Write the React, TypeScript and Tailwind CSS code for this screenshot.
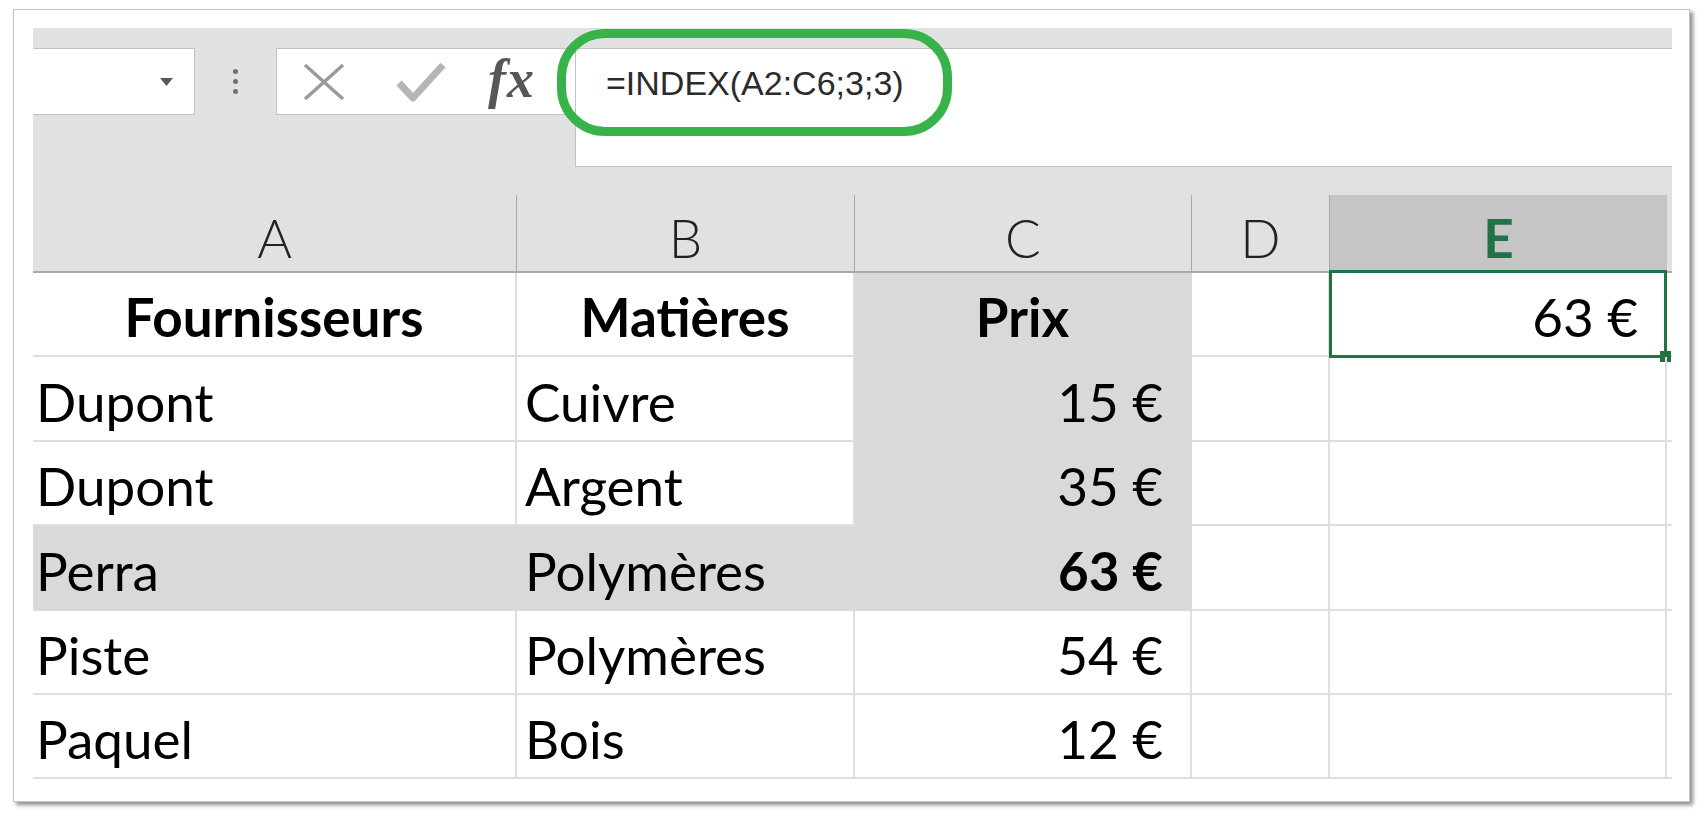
import React from "react";

type Row = {
  a: string;
  b: string;
  c: string;
  head?: boolean;
  hit?: boolean;
};

const rows: Row[] = [
  { a: "Fournisseurs", b: "Matières", c: "Prix", head: true },
  { a: "Dupont", b: "Cuivre", c: "15 €" },
  { a: "Dupont", b: "Argent", c: "35 €" },
  { a: "Perra", b: "Polymères", c: "63 €", hit: true },
  { a: "Piste", b: "Polymères", c: "54 €" },
  { a: "Paquel", b: "Bois", c: "12 €" },
];

const cellBase =
  "h-full shrink-0 flex items-end pb-[12px] leading-none border-b-2 border-r-2";
const white = "border-[#dedede]";
const grey = "bg-[#d9d9d9] border-transparent";

const App = () => {
  return (
    <div className="min-h-screen bg-white pl-[13px] pt-[9px] font-['Lato',sans-serif] text-black">
      <div className="w-[1677px] h-[793px] bg-white border border-[#c4c4c4] shadow-[3px_3px_4px_rgba(0,0,0,0.45)] pl-[19px] pt-[18px] pr-[17px]">
        {/* formula bar + column headers */}
        <div className="relative bg-[#e1e1e1]">
          <div className="flex items-start pt-[20px]">
            <div className="w-[162px] h-[67px] bg-white border-y border-r border-[#c2c2c2] flex items-center justify-end pr-[21px]">
              <svg width="13" height="8" viewBox="0 0 13 8">
                <polygon points="0,0 13,0 6.5,8" fill="#5a5a5a" />
              </svg>
            </div>
            <div className="w-[81px] h-[67px] flex flex-col items-center justify-center gap-[5px]">
              <span className="w-[5px] h-[5px] rounded-full bg-[#707070]" />
              <span className="w-[5px] h-[5px] rounded-full bg-[#707070]" />
              <span className="w-[5px] h-[5px] rounded-full bg-[#707070]" />
            </div>
            <div className="w-[299px] h-[67px] bg-white border-y border-l border-[#c2c2c2] flex items-center">
              <svg className="ml-[25px]" width="44" height="40" viewBox="0 0 44 40">
                <path d="M3 3 L41 37 M41 3 L3 37" stroke="#9a9a9a" strokeWidth="3.5" fill="none" />
              </svg>
              <svg className="ml-[50px]" width="50" height="42" viewBox="0 0 50 42">
                <path d="M3 22 L17 37 L47 4" stroke="#b5b5b5" strokeWidth="7" fill="none" strokeLinejoin="round" />
              </svg>
              <span className="ml-[42px] font-['Liberation_Serif',serif] italic font-bold text-[54px] leading-none text-[#575757] tracking-[1px] -mt-[6px]">
                fx
              </span>
            </div>
            <div className="flex-1 h-[119px] bg-white border-y border-l border-[#c2c2c2] pl-[30px] pt-[17px]">
              <span className="font-['Liberation_Sans',Arial,sans-serif] text-[34px] leading-none text-[#2b2b2b]">
                =INDEX(A2:C6;3;3)
              </span>
            </div>
          </div>

          <div className="flex h-[78px] mt-[28px] text-[53px] leading-none">
            <div className="w-[484px] shrink-0 flex items-end justify-center pb-[7px] border-b-2 border-r border-[#a9a9a9] font-light text-[#222]">A</div>
            <div className="w-[338px] shrink-0 flex items-end justify-center pb-[7px] border-b-2 border-r border-[#a9a9a9] font-light text-[#222]">B</div>
            <div className="w-[337px] shrink-0 flex items-end justify-center pb-[7px] border-b-2 border-r border-[#a9a9a9] font-light text-[#222]">C</div>
            <div className="w-[138px] shrink-0 flex items-end justify-center pb-[7px] border-b-2 border-r border-[#a9a9a9] font-light text-[#222]">D</div>
            <div className="w-[337px] shrink-0 flex items-end justify-center pb-[7px] border-b-2 border-[#217346] bg-[#c5c5c5] font-bold text-[#217346]">E</div>
            <div className="flex-1 border-b-2 border-[#a9a9a9]" />
          </div>

          {/* hand-drawn highlight around the formula */}
          <div className="absolute left-[524px] top-[1px] w-[395px] h-[107px] border-[9px] border-[#37b34a] rounded-[48px]" />
        </div>

        {/* sheet cells */}
        <div className="text-[53px]">
          {rows.map((r, i) => {
            const cGrey = i <= 3;
            return (
              <div key={i} className={`flex h-[84.4px] ${r.head ? "font-bold" : ""}`}>
                <div className={`w-[484px] ${cellBase} ${r.hit ? grey : white} ${r.head ? "justify-center" : "pl-[3px]"}`}>
                  {r.a}
                </div>
                <div className={`w-[338px] ${cellBase} ${r.hit ? grey : white} ${r.head ? "justify-center" : "pl-[8px]"}`}>
                  {r.b}
                </div>
                <div className={`w-[337px] ${cellBase} ${cGrey ? grey : white} ${r.head ? "justify-center" : "justify-end pr-[27px]"} ${r.hit ? "font-bold" : ""}`}>
                  {r.c}
                </div>
                <div className={`w-[138px] ${cellBase} ${white}`} />
                <div className={`relative w-[337px] ${cellBase} ${white} justify-end pr-[27px] font-normal`}>
                  {i === 0 && (
                    <>
                      63 €
                      <div className="absolute -top-[3px] -left-[1px] -right-[2px] -bottom-[3px] border-[3px] border-[#217346]" />
                      <div className="absolute -right-[6px] -bottom-[7px] w-[11px] h-[11px] bg-[#217346]" />
                    </>
                  )}
                </div>
                <div className={`flex-1 h-full border-b-2 ${white}`} />
              </div>
            );
          })}
        </div>
      </div>
    </div>
  );
};

export default App;
